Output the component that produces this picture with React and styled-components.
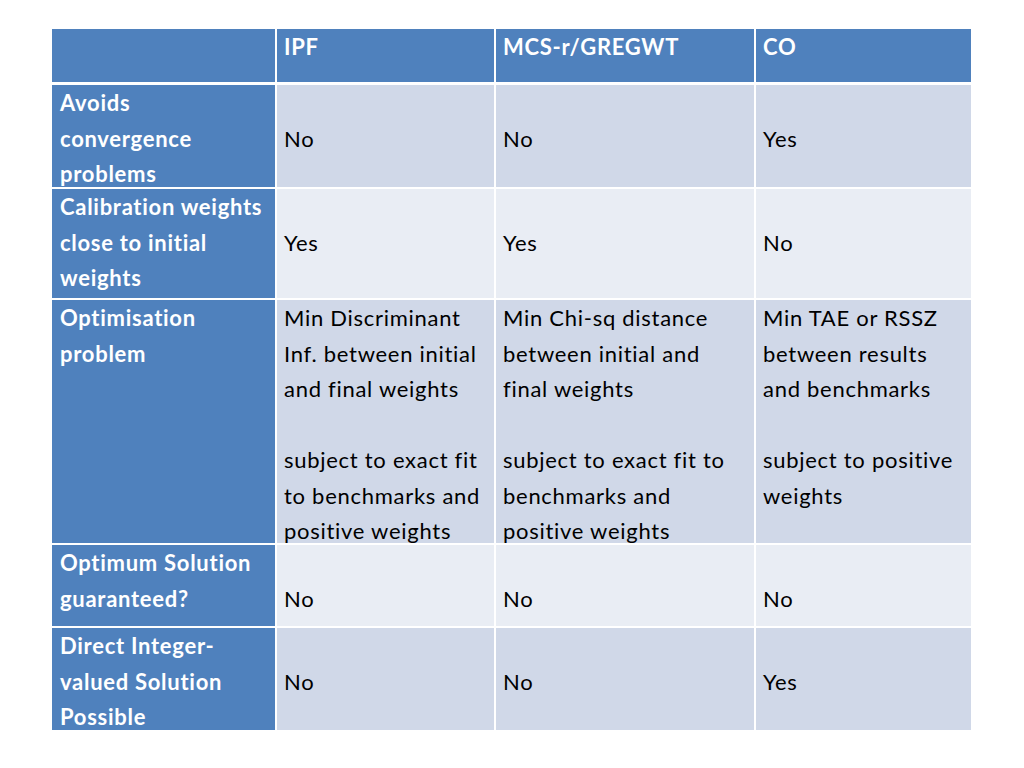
import React from 'react';
import styled, { createGlobalStyle } from 'styled-components';

const HEAD_COLOR = '#4f81bd';
const ODD_COLOR = '#d0d8e8';
const EVEN_COLOR = '#e9edf4';

const GlobalStyle = createGlobalStyle`
	html, body {
		margin: 0;
		padding: 0;
		background: #ffffff;
	}
	body {
		font-family: Lato, "Open Sans", "Liberation Sans", sans-serif;
	}
`;

const Page = styled.main`
	width: 1024px;
	height: 768px;
	padding: 29px 0 0 52px;
	box-sizing: border-box;
	background: #ffffff;
`;

const Table = styled.div`
	display: grid;
	grid-template-columns: 223px 217px 258px 215px;
	grid-template-rows: 54px 102px 109px 243px 81px 102px;
	column-gap: 2px;
	row-gap: 2px;
	width: 919px;
`;

const Cell = styled.div`
	box-sizing: border-box;
	padding: ${ p => (p.$lead ? '35.5px' : '0') } 4px 0 7px;
	margin-bottom: ${ p => (p.$head ? '1px' : '0') };
	background: ${ p => p.$bg };
	color: ${ p => (p.$bold ? '#ffffff' : '#000000') };
	font-weight: ${ p => (p.$bold ? 700 : 400) };
	font-size: 22px;
	letter-spacing: 0.72px;
	font-variant-ligatures: none;
	line-height: 35.5px;
	white-space: pre-line;
	overflow: visible;
`;

const LabelCell = styled(Cell)`
	padding-left: 8px;
	padding-right: 0;
`;

const columns = ['IPF', 'MCS-r/GREGWT', 'CO'];

const rows = [
	{
		label: 'Avoids\nconvergence\nproblems',
		values: ['No', 'No', 'Yes'],
		lead: true,
	},
	{
		label: 'Calibration weights\nclose to initial\nweights',
		values: ['Yes', 'Yes', 'No'],
		lead: true,
	},
	{
		label: 'Optimisation\nproblem',
		values: [
			'Min Discriminant\nInf. between initial\nand final weights\n\nsubject to exact fit\nto benchmarks and\npositive weights',
			'Min Chi-sq distance\nbetween initial and\nfinal weights\n\nsubject to exact fit to\nbenchmarks and\npositive weights',
			'Min TAE or RSSZ\nbetween results\nand benchmarks\n\nsubject to positive\nweights',
		],
		lead: false,
	},
	{
		label: 'Optimum Solution\nguaranteed?',
		values: ['No', 'No', 'No'],
		lead: true,
	},
	{
		label: 'Direct Integer-\nvalued Solution\nPossible',
		values: ['No', 'No', 'Yes'],
		lead: true,
	},
];

const App = () => {
	return (
		<Page>
			<GlobalStyle />
			<Table>
				<LabelCell $bg={ HEAD_COLOR } $bold $head />
				{ columns.map(name => (
					<Cell key={ name } $bg={ HEAD_COLOR } $bold $head>
						{ name }
					</Cell>
				)) }
				{ rows.map((row, i) => {
					const bg = i % 2 === 0 ? ODD_COLOR : EVEN_COLOR;
					return (
						<React.Fragment key={ row.label }>
							<LabelCell $bg={ HEAD_COLOR } $bold>
								{ row.label }
							</LabelCell>
							{ row.values.map((value, j) => (
								<Cell key={ j } $bg={ bg } $lead={ row.lead }>
									{ value }
								</Cell>
							)) }
						</React.Fragment>
					);
				}) }
			</Table>
		</Page>
	);
};

export default App;
